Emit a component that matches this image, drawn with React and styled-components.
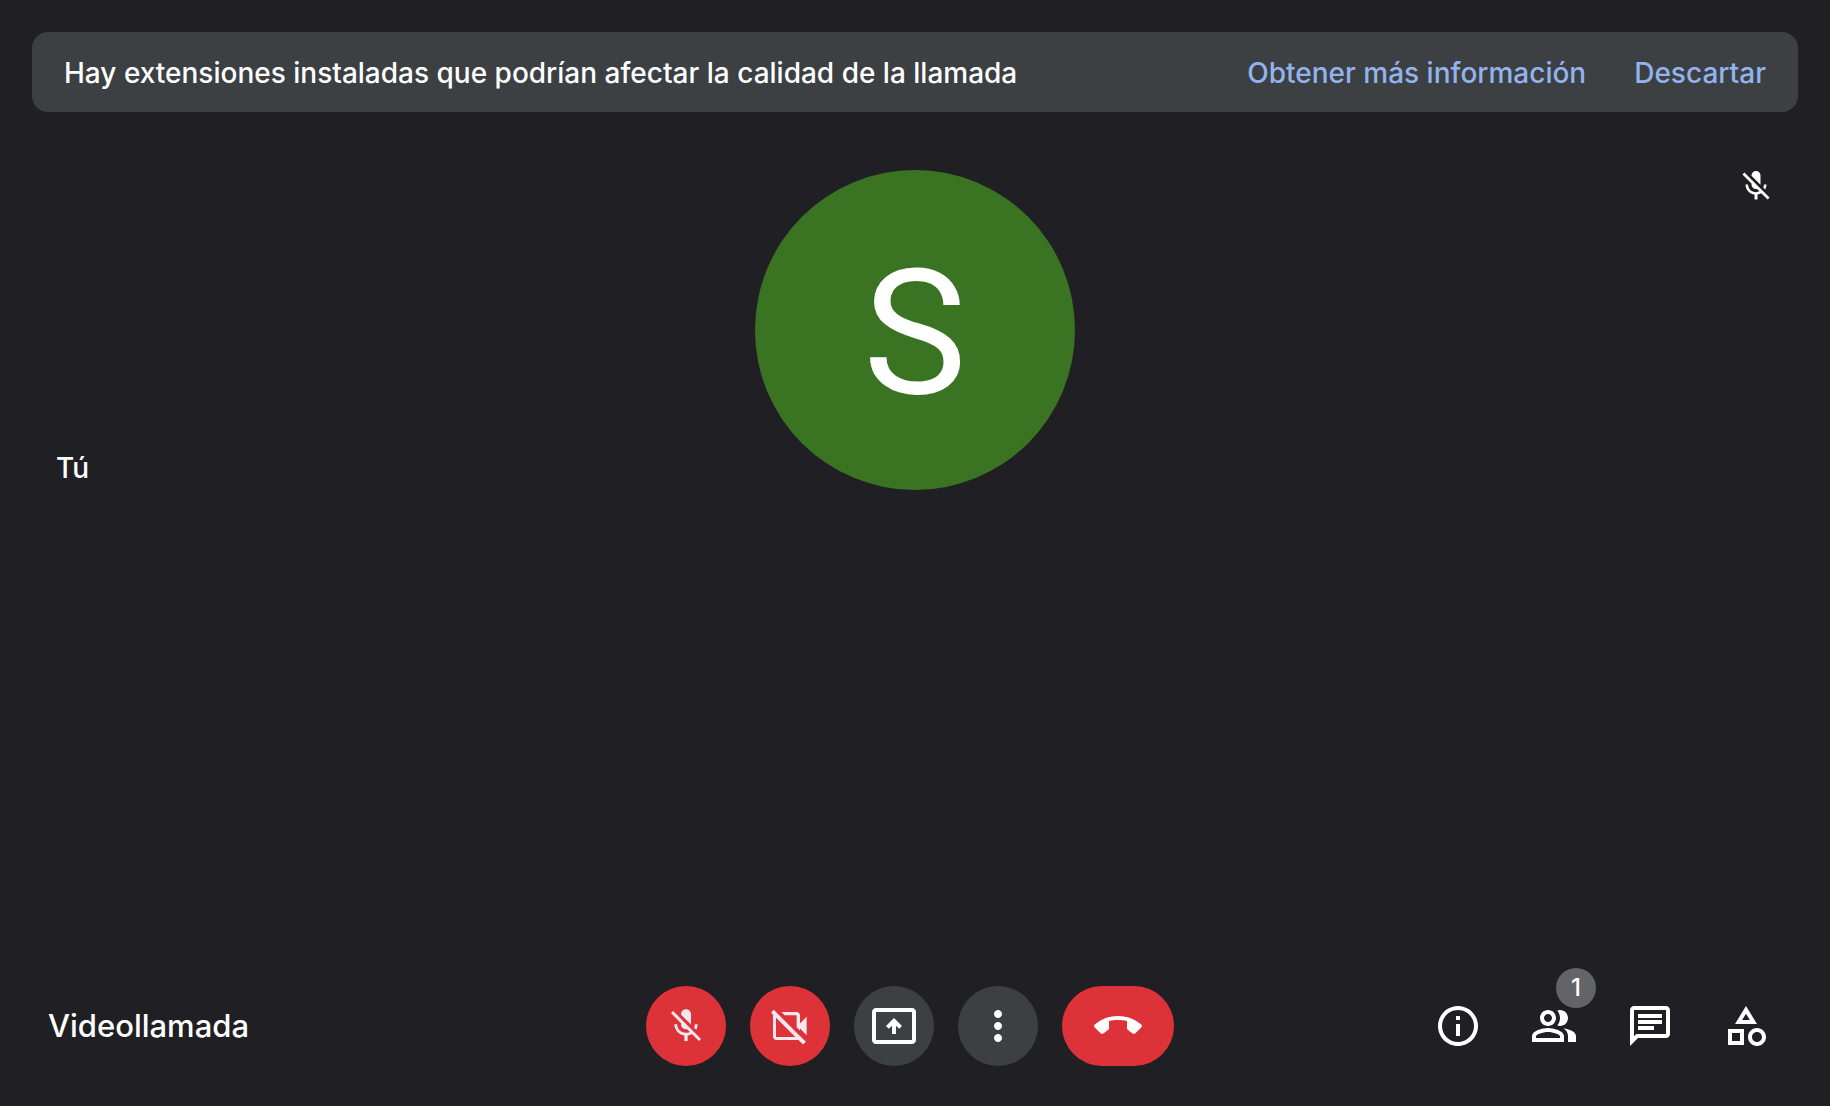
import React from "react";
import styled, { createGlobalStyle } from "styled-components";

const color = {
  page: "#202024",
  surface: "#3c4043",
  badge: "#636468",
  link: "#93b3ed",
  danger: "#dd3338",
  avatar: "#3a7422",
  text: "#ffffff",
  muted: "#f4e8ee",
};

const Global = createGlobalStyle`
  *, *::before, *::after { box-sizing: border-box; }
  body {
    margin: 0;
    background: ${color.page};
    color: ${color.text};
    font-family: Inter, Roboto, sans-serif;
    font-weight: 500;
  }
`;

const Page = styled.div`
  min-height: 100vh;
  padding: 32px;
  padding-bottom: 40px;
  display: flex;
  flex-direction: column;
`;

const Banner = styled.div`
  display: flex;
  align-items: center;
  gap: 48px;
  min-height: 80px;
  padding: 2px 32px 0;
  border-radius: 16px;
  background: ${color.surface};
  font-size: 28px;
  line-height: 36px;
`;

const BannerText = styled.p`
  flex: 1;
  margin: 0;
`;

const BannerLink = styled.a`
  color: ${color.link};
  text-decoration: none;
`;

const BannerButton = styled.button`
  padding: 0;
  border: 0;
  background: none;
  color: ${color.link};
  font: inherit;
  cursor: pointer;
`;

const Stage = styled.main`
  flex: 1;
  padding-top: 58px;
`;

const Tile = styled.section`
  display: grid;
  grid-template-columns: 1fr auto 1fr;
  padding: 0 24px;
`;

const Name = styled.span`
  align-self: end;
  padding-bottom: 4px;
  font-size: 28px;
  line-height: 36px;
`;

const Avatar = styled.div`
  display: grid;
  place-items: center;
  width: 320px;
  height: 320px;
  padding-top: 8px;
  border-radius: 50%;
  background: ${color.avatar};
  font-family: Roboto, sans-serif;
  font-weight: 400;
  font-size: 174px;
  line-height: 1;
`;

const TileStatus = styled.span`
  justify-self: end;
  align-self: start;
  margin-top: -2px;
`;

const Footer = styled.footer`
  display: grid;
  grid-template-columns: 1fr auto 1fr;
  align-items: center;
  padding: 0 16px;
`;

const Title = styled.h1`
  margin: 0;
  font-size: 31px;
  line-height: 40px;
  font-weight: 500;
`;

const Controls = styled.div`
  display: flex;
  gap: 24px;
  margin-right: 10px;
`;

const ControlButton = styled.button`
  display: grid;
  place-items: center;
  width: ${(p) => (p.$wide ? 112 : 80)}px;
  height: 80px;
  padding: 0;
  border: 0;
  border-radius: 40px;
  background: ${(p) => (p.$danger ? color.danger : color.surface)};
  color: ${(p) => (p.$soft ? color.muted : color.text)};
  cursor: pointer;
`;

const Panels = styled.div`
  display: flex;
  justify-content: flex-end;
  gap: 48px;
  padding-right: 12px;
`;

const PanelButton = styled.button`
  position: relative;
  display: grid;
  padding: 0;
  border: 0;
  background: none;
  color: ${color.text};
  font: inherit;
  cursor: pointer;
`;

const Badge = styled.span`
  position: absolute;
  left: 26px;
  bottom: 42px;
  width: 40px;
  height: 40px;
  border-radius: 50%;
  background: ${color.badge};
  font-size: 24px;
  line-height: 40px;
  text-align: center;
`;

const Svg = styled.svg`
  display: block;
  width: ${(p) => p.$size}px;
  height: ${(p) => p.$size}px;
  fill: currentColor;
`;

const icons = {
  micOff:
    "M19 11h-1.7c0 .74-.16 1.43-.43 2.05l1.23 1.23c.56-.98.9-2.09.9-3.28zm-4.02.17c0-.06.02-.11.02-.17V5c0-1.66-1.34-3-3-3S9 3.34 9 5v.18l5.98 5.99zM4.27 3L3 4.27l6.01 6.01V11c0 1.66 1.33 3 2.99 3 .22 0 .44-.03.65-.08l1.66 1.66c-.71.33-1.5.52-2.31.52-2.76 0-5.3-2.1-5.3-5.1H5c0 3.41 2.72 6.23 6 6.72V21h2v-3.28c.91-.13 1.77-.45 2.54-.9L19.73 21 21 19.73 4.27 3z",
  videoOff:
    "M18 10.48V5.6c0-1.1-.9-2-2-2H6.83l2 2H16v7.17l2 2v-1.25l4 3.98v-11l-4 3.98zM16 16L6 6 4 4 2.3 2.3.6 4l1.3 1.3c-.07.2-.1.4-.1.7v12.4c0 1.1.9 2 2 2H16c.3 0 .6-.06.9-.2l2.95 2.95 1.7-1.7L18 18l-2-2zM3.6 18.6V7L15.2 18.6H3.6z",
  present:
    "M21 3H3c-1.1 0-2 .9-2 2v14c0 1.1.9 2 2 2h18c1.1 0 2-.9 2-2V5c0-1.1-.9-2-2-2zm0 16H3V5h18v14zM12 8l-4 4 1.41 1.41L11 11.83V16h2v-4.17l1.59 1.58L16 12z",
  more:
    "M12 8c1.1 0 2-.9 2-2s-.9-2-2-2-2 .9-2 2 .9 2 2 2zm0 2c-1.1 0-2 .9-2 2s.9 2 2 2 2-.9 2-2-.9-2-2-2zm0 6c-1.1 0-2 .9-2 2s.9 2 2 2 2-.9 2-2-.9-2-2-2z",
  hangUp:
    "M12 7C7.5 7 3.4 8.7.4 11.3c-.5.4-.5 1 0 1.5l2.9 2.8c.4.4.9.4 1.4.1L7 14c.4-.3.5-.6.5-1V9.5C8.9 9.1 10.4 9 12 9s3.1.1 4.5.5V13c0 .4.1.7.5 1l2.3 1.7c.5.3 1 .3 1.4-.1l2.9-2.8c.5-.5.5-1.1 0-1.5C20.6 8.7 16.5 7 12 7z",
  info:
    "M11 7h2v2h-2V7zm0 4h2v6h-2v-6zm1-9C6.48 2 2 6.48 2 12s4.48 10 10 10 10-4.48 10-10S17.52 2 12 2zm0 18c-4.41 0-8-3.59-8-8s3.59-8 8-8 8 3.59 8 8-3.59 8-8 8z",
  people:
    "M16.67 13.13C18.04 14.06 19 15.32 19 17v3h4v-3c0-2.18-3.57-3.47-6.33-3.87zM15 12c2.21 0 4-1.79 4-4s-1.79-4-4-4c-.47 0-.91.1-1.33.24C14.5 5.27 15 6.58 15 8s-.5 2.73-1.33 3.76c.42.14.86.24 1.33.24zM9 12c2.21 0 4-1.79 4-4s-1.79-4-4-4-4 1.79-4 4 1.79 4 4 4zm0-6c1.1 0 2 .9 2 2s-.9 2-2 2-2-.9-2-2 .9-2 2-2zM9 13c-2.67 0-8 1.34-8 4v3h16v-3c0-2.66-5.33-4-8-4zm6 5H3v-.99C3.2 16.29 6.3 15 9 15s5.8 1.29 6 2v1z",
  chat:
    "M4 4h16v12H5.17L4 17.17V4m0-2c-1.1 0-1.99.9-1.99 2L2 22l4-4h14c1.1 0 2-.9 2-2V4c0-1.1-.9-2-2-2H4zm2 10h8v2H6v-2zm0-3h12v2H6V9zm0-3h12v2H6V6z",
  shapes:
    "M12 2l-5.5 9h11L12 2zm0 3.84L13.93 9h-3.87L12 5.84zM17.5 13c-2.49 0-4.5 2.01-4.5 4.5s2.01 4.5 4.5 4.5 4.5-2.01 4.5-4.5-2.01-4.5-4.5-4.5zm0 7c-1.38 0-2.5-1.12-2.5-2.5s1.12-2.5 2.5-2.5 2.5 1.12 2.5 2.5-1.12 2.5-2.5 2.5zM3 21.5h8v-8H3v8zm2-6h4v4H5v-4z",
};

function Icon({ name, size = 48 }) {
  return (
    <Svg $size={size} viewBox="0 0 24 24" aria-hidden="true">
      <path fillRule="evenodd" d={icons[name]} />
    </Svg>
  );
}

const controls = [
  { icon: "micOff", label: "Activar micrófono", size: 40, danger: true, soft: true },
  { icon: "videoOff", label: "Activar cámara", size: 40, danger: true, soft: true },
  { icon: "present", label: "Presentar ahora" },
  { icon: "more", label: "Más opciones" },
  { icon: "hangUp", label: "Salir de la llamada", danger: true, wide: true },
];

const panels = [
  { icon: "info", label: "Detalles de la reunión" },
  { icon: "people", label: "Participantes", count: 1 },
  { icon: "chat", label: "Chat" },
  { icon: "shapes", label: "Actividades" },
];

export default function App() {
  return (
    <>
      <Global />
      <Page>
        <Banner role="status">
          <BannerText>
            Hay extensiones instaladas que podrían afectar la calidad de la llamada
          </BannerText>
          <BannerLink href="#informacion">Obtener más información</BannerLink>
          <BannerButton type="button">Descartar</BannerButton>
        </Banner>

        <Stage>
          <Tile>
            <Name>Tú</Name>
            <Avatar>S</Avatar>
            <TileStatus>
              <Icon name="micOff" size={36} />
            </TileStatus>
          </Tile>
        </Stage>

        <Footer>
          <Title>Videollamada</Title>
          <Controls>
            {controls.map((c) => (
              <ControlButton
                key={c.icon}
                type="button"
                aria-label={c.label}
                $danger={c.danger}
                $wide={c.wide}
                $soft={c.soft}
              >
                <Icon name={c.icon} size={c.size} />
              </ControlButton>
            ))}
          </Controls>
          <Panels>
            {panels.map((p) => (
              <PanelButton key={p.icon} type="button" aria-label={p.label}>
                <Icon name={p.icon} />
                {p.count && <Badge>{p.count}</Badge>}
              </PanelButton>
            ))}
          </Panels>
        </Footer>
      </Page>
    </>
  );
}
